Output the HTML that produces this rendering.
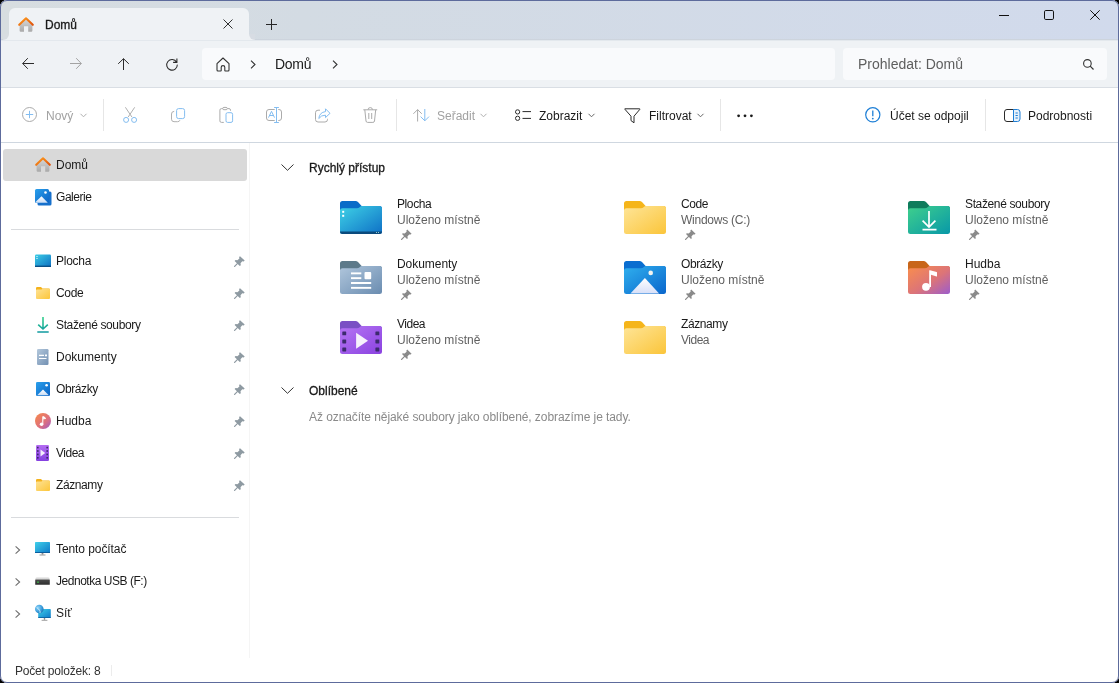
<!DOCTYPE html>
<html><head><meta charset="utf-8">
<style>
*{box-sizing:border-box;margin:0;padding:0}
html,body{width:1119px;height:683px;overflow:hidden;background:#000}
body{font-family:"Liberation Sans",sans-serif;font-size:12px;color:#1a1a1a;position:relative}
.win{position:absolute;left:0;top:0;width:1119px;height:683px;border-radius:7px;overflow:hidden;background:#fff}
.frame{position:absolute;left:0;top:0;width:1119px;height:683px;border:1px solid #5d6b9c;border-radius:7px;pointer-events:none}
.a{position:absolute}
svg{position:absolute;overflow:visible}
.t{position:absolute;white-space:nowrap;line-height:12px;font-size:12px;will-change:transform}
.title{position:absolute;left:0;top:0;width:1119px;height:40px;background:linear-gradient(90deg,#d7dde0 0%,#d3dbe3 27%,#d1daec 100%)}
.tab{position:absolute;left:9px;top:8px;width:240px;height:33px;background:#eff2f5;border-radius:6px 6px 0 0}
.tabfl{position:absolute;top:34px;width:6px;height:6px;background:#eff2f5}
.tabfl i{position:absolute;left:0;top:0;width:6px;height:6px;background:#d8dde1}
.addr{position:absolute;left:0;top:40px;width:1119px;height:47px;background:#eff2f5}
.addrline{position:absolute;left:0;top:87px;width:1119px;height:1px;background:#d9dee4}
.box{position:absolute;top:48px;height:32px;background:#f9fafc;border-radius:4px}
.tool{position:absolute;left:0;top:88px;width:1119px;height:54px;background:#fff}
.toolline{position:absolute;left:0;top:142px;width:1119px;height:1px;background:#cfd7e0}
.vsep{position:absolute;top:99px;width:1px;height:32px;background:#e6e6e6}
.gray{color:#a2a2a2}
.side{position:absolute;left:249px;top:143px;width:1px;height:515px;background:#f5f5f5}
.sel{position:absolute;left:3px;top:149px;width:244px;height:32px;background:#d9d9d9;border-radius:3px}
.sep{position:absolute;left:11px;width:228px;height:1px;background:#d9dbde}
.sub{color:#5f5f5f}
.hd{font-weight:400;-webkit-text-stroke:0.3px #1a1a1a;color:#1a1a1a}
</style></head><body>
<div class="win">
  <!-- title bar -->
  <div class="title"></div>
  <div class="a" style="left:0;top:39px;width:1119px;height:1px;background:#cdd4dd"></div>
  <div class="tab"></div>
  <div class="tabfl" style="left:3px"><i style="border-radius:0 0 6px 0"></i></div>
  <div class="tabfl" style="left:249px"><i style="border-radius:0 0 0 6px;background:#d7dce3"></i></div>
  <!-- home icon tab -->
  <svg style="left:18px;top:17px" width="16" height="16" viewBox="0 0 16 16">
    <defs>
      <linearGradient id="hb" x1="0" y1="0" x2="0" y2="1"><stop offset="0" stop-color="#d6d6d6"/><stop offset="1" stop-color="#a9a9a9"/></linearGradient>
      <linearGradient id="hr" x1="0" y1="0" x2="1" y2="1"><stop offset="0" stop-color="#ff9e1f"/><stop offset="1" stop-color="#e0520a"/></linearGradient>
    </defs>
    <path d="M1.6 8 L8 2.2 L14.4 8 V13.6 Q14.4 14.8 13.2 14.8 H10.2 V9.2 H6 V14.8 H2.8 Q1.6 14.8 1.6 13.6 Z" fill="url(#hb)"/>
    <path d="M1.2 7.8 L8 1.3 L14.8 7.8" fill="none" stroke="url(#hr)" stroke-width="2.1" stroke-linecap="round" stroke-linejoin="round"/>
  </svg>
  <div class="t hd" style="left:45px;top:19px">Domů</div>
  <svg style="left:223px;top:19px" width="10" height="10" viewBox="0 0 10 10"><path d="M0.5 0.5 L9.5 9.5 M9.5 0.5 L0.5 9.5" stroke="#262626" stroke-width="0.95"/></svg>
  <svg style="left:266px;top:19px" width="11" height="11" viewBox="0 0 11 11"><path d="M5.5 0 V11 M0 5.5 H11" stroke="#262626" stroke-width="1"/></svg>
  <!-- window controls -->
  <svg style="left:999px;top:10px" width="10" height="10" viewBox="0 0 10 10"><path d="M0 5.5 H10" stroke="#111" stroke-width="1"/></svg>
  <svg style="left:1044px;top:10px" width="10" height="10" viewBox="0 0 10 10"><rect x="0.5" y="0.5" width="9" height="9" rx="1.3" fill="none" stroke="#111" stroke-width="1"/></svg>
  <svg style="left:1090px;top:10px" width="10" height="10" viewBox="0 0 10 10"><path d="M0.3 0.3 L9.7 9.7 M9.7 0.3 L0.3 9.7" stroke="#111" stroke-width="1"/></svg>

  <!-- address row -->
  <div class="addr"></div>
  <div class="a" style="left:0;top:40px;width:1119px;height:1px;background:#e3e8ed"></div>
  <div class="addrline"></div>
  <svg style="left:22px;top:58px" width="12" height="12" viewBox="0 0 12 12"><path d="M5.8 0.2 L0.7 5.5 L5.8 10.8 M0.7 5.5 H12" fill="none" stroke="#2b2b2b" stroke-width="1"/></svg>
  <svg style="left:70px;top:58px" width="12" height="12" viewBox="0 0 12 12"><path d="M6.2 0.2 L11.3 5.5 L6.2 10.8 M11.3 5.5 H0" fill="none" stroke="#a3a3a3" stroke-width="1"/></svg>
  <svg style="left:118px;top:58px" width="12" height="12" viewBox="0 0 12 12"><path d="M0.2 5.8 L5.5 0.7 L10.8 5.8 M5.5 0.7 V12" fill="none" stroke="#2b2b2b" stroke-width="1"/></svg>
  <svg style="left:166px;top:58px" width="12" height="12" viewBox="0 0 12 12"><path d="M10.6 4.2 A5.3 5.3 0 1 0 11.3 6.6 M10.9 0.6 V4.4 H7.1" fill="none" stroke="#2b2b2b" stroke-width="1.1"/></svg>
  <div class="box" style="left:202px;width:633px"></div>
  <svg style="left:216px;top:57px" width="14" height="15" viewBox="0 0 14 15"><path d="M1 6.6 L7 1 L13 6.6 V13 Q13 14 12 14 H9.3 Q8.8 14 8.8 13.5 V10.2 Q8.8 8.6 7 8.6 Q5.2 8.6 5.2 10.2 V13.5 Q5.2 14 4.7 14 H2 Q1 14 1 13 Z" fill="none" stroke="#333" stroke-width="1.1" stroke-linejoin="round"/></svg>
  <svg style="left:250px;top:60px" width="7" height="9" viewBox="0 0 7 9"><path d="M1 0.6 L5 4.5 L1 8.4" fill="none" stroke="#333" stroke-width="1.1"/></svg>
  <div class="t" style="left:275px;top:57px;font-size:14px;line-height:14px;color:#1a1a1a;letter-spacing:-0.3px">Domů</div>
  <svg style="left:332px;top:60px" width="7" height="9" viewBox="0 0 7 9"><path d="M1 0.6 L5 4.5 L1 8.4" fill="none" stroke="#333" stroke-width="1.1"/></svg>
  <div class="box" style="left:843px;width:264px"></div>
  <div class="t" style="left:858px;top:57px;font-size:14px;line-height:14px;color:#5e5e5e">Prohledat: Domů</div>
  <svg style="left:1083px;top:59px" width="11" height="11" viewBox="0 0 11 11"><circle cx="4.4" cy="4.4" r="3.8" fill="none" stroke="#333" stroke-width="1.1"/><path d="M7.2 7.2 L10.5 10.5" stroke="#333" stroke-width="1.2"/></svg>

  <!-- toolbar -->
  <div class="tool"></div>
  <div class="toolline"></div>
    <svg style="left:22px;top:107px" width="16" height="16" viewBox="0 0 16 16"><circle cx="7.5" cy="7.5" r="7" fill="none" stroke="#ababab" stroke-width="1"/><path d="M7.5 3.8 V11.2 M3.8 7.5 H11.2" stroke="#84bdf0" stroke-width="1"/></svg>
  <div class="t gray" style="left:46px;top:110px">Nový</div>
  <svg style="left:80px;top:113px" width="7" height="5" viewBox="0 0 7 5"><path d="M0.5 0.8 L3.5 3.8 L6.5 0.8" fill="none" stroke="#b0b0b0" stroke-width="1"/></svg>
  <div class="vsep" style="left:103px"></div>
  <svg style="left:123px;top:107px" width="15" height="16" viewBox="0 0 15 16"><path d="M2.4 0.3 L8.9 10 M11.7 0.3 L5.2 10" stroke="#b0b0b0" stroke-width="1"/><circle cx="3.1" cy="12.9" r="2.5" fill="none" stroke="#84bdf0" stroke-width="1"/><circle cx="11.1" cy="12.9" r="2.5" fill="none" stroke="#84bdf0" stroke-width="1"/></svg>
  <svg style="left:171px;top:108px" width="15" height="15" viewBox="0 0 15 15"><path d="M3.2 3.4 Q0.5 3.4 0.5 6 V11.2 Q0.5 13.7 3 13.7 H6.5 Q8.5 13.7 8.9 12.2" fill="none" stroke="#b0b0b0" stroke-width="1"/><rect x="5.6" y="0.6" width="8" height="10" rx="2" fill="none" stroke="#84bdf0" stroke-width="1"/></svg>
  <svg style="left:219px;top:107px" width="15" height="16" viewBox="0 0 15 16"><path d="M3.6 1.6 H2.4 Q0.9 1.6 0.9 3.1 V13.9 Q0.9 15.4 2.4 15.4 H4.8 M8.4 1.6 H10 Q11.5 1.6 11.5 3.1 V3.8" fill="none" stroke="#ababab" stroke-width="1"/><rect x="3.7" y="0.4" width="4.6" height="2.3" rx="1.15" fill="none" stroke="#ababab" stroke-width="1"/><rect x="7" y="5.7" width="6.6" height="9.7" rx="1.6" fill="none" stroke="#84bdf0" stroke-width="1"/></svg>
  <svg style="left:266px;top:107px" width="17" height="16" viewBox="0 0 17 16"><path d="M8.7 2.5 H3 Q0.5 2.5 0.5 5 V11 Q0.5 13.5 3 13.5 H8.7 M12.3 2.5 H13 Q15.5 2.5 15.5 5 V11 Q15.5 13.5 13 13.5 H12.3" fill="none" stroke="#ababab" stroke-width="1"/><path d="M2.5 10.6 L5.5 4.3 L8.5 10.6 M3.5 8.5 H7.5" fill="none" stroke="#84bdf0" stroke-width="1"/><path d="M10.5 0.5 V15.5 M8.1 0.5 H12.9 M8.1 15.5 H12.9" stroke="#84bdf0" stroke-width="1"/></svg>
  <svg style="left:315px;top:108px" width="16" height="15" viewBox="0 0 16 15"><path d="M5 2.2 H3 Q0.5 2.2 0.5 4.7 V11.5 Q0.5 14 3 14 H10 Q12.5 14 12.5 11.5 V10.8" fill="none" stroke="#ababab" stroke-width="1"/><path d="M10.5 0.8 L15 5.3 L10.5 9.6 V7.2 Q6.2 7 3.8 10.5 Q4.4 4.4 10.5 3.6 Z" fill="none" stroke="#84bdf0" stroke-width="1" stroke-linejoin="round"/></svg>
  <svg style="left:363px;top:107px" width="15" height="16" viewBox="0 0 15 16"><path d="M0.3 2.8 H14.2 M5 2.8 Q5 0.6 7.25 0.6 Q9.5 0.6 9.5 2.8 M1.8 2.8 L3 14 Q3.2 15.4 4.6 15.4 H9.9 Q11.3 15.4 11.5 14 L12.7 2.8 M5.8 6 V12 M8.7 6 V12" fill="none" stroke="#ababab" stroke-width="1"/></svg>
  <div class="vsep" style="left:396px"></div>
  <svg style="left:413px;top:109px" width="17" height="13" viewBox="0 0 17 13"><path d="M0.4 4.8 L4.6 0.6 L8.8 4.8 M4.6 0.6 V12.5" fill="none" stroke="#ababab" stroke-width="1"/><path d="M7.6 7.6 L11.8 11.8 L16 7.6 M11.8 11.8 V0" fill="none" stroke="#84bdf0" stroke-width="1"/></svg>
  <div class="t gray" style="left:437px;top:110px">Seřadit</div>
  <svg style="left:480px;top:113px" width="7" height="5" viewBox="0 0 7 5"><path d="M0.5 0.8 L3.5 3.8 L6.5 0.8" fill="none" stroke="#b0b0b0" stroke-width="1"/></svg>
  <svg style="left:515px;top:109px" width="17" height="13" viewBox="0 0 17 13"><rect x="0.5" y="0.8" width="4.2" height="4.2" rx="2" fill="none" stroke="#2a2a2a" stroke-width="1"/><rect x="0.5" y="7.2" width="4.2" height="4.2" rx="2" fill="none" stroke="#2a2a2a" stroke-width="1"/><path d="M7.5 2.6 H16 M7.5 9.4 H16" stroke="#2a2a2a" stroke-width="1"/></svg>
  <div class="t" style="left:539px;top:110px">Zobrazit</div>
  <svg style="left:588px;top:113px" width="7" height="5" viewBox="0 0 7 5"><path d="M0.5 0.8 L3.5 3.8 L6.5 0.8" fill="none" stroke="#666" stroke-width="1"/></svg>
  <svg style="left:624px;top:108px" width="17" height="16" viewBox="0 0 17 16"><path d="M0.8 0.8 H15.6 Q16.2 0.8 15.8 1.4 L10 8.2 V14.8 L7 12.6 V8.2 L1 1.4 Q0.6 0.8 0.8 0.8 Z" fill="none" stroke="#2a2a2a" stroke-width="1" stroke-linejoin="round"/></svg>
  <div class="t" style="left:649px;top:110px">Filtrovat</div>
  <svg style="left:697px;top:113px" width="7" height="5" viewBox="0 0 7 5"><path d="M0.5 0.8 L3.5 3.8 L6.5 0.8" fill="none" stroke="#666" stroke-width="1"/></svg>
  <div class="vsep" style="left:720px"></div>
  <svg style="left:737px;top:114px" width="17" height="4" viewBox="0 0 17 4"><circle cx="1.6" cy="1.8" r="1.4" fill="#1a1a1a"/><circle cx="8" cy="1.8" r="1.4" fill="#1a1a1a"/><circle cx="14.4" cy="1.8" r="1.4" fill="#1a1a1a"/></svg>
  <svg style="left:865px;top:107px" width="16" height="16" viewBox="0 0 16 16"><circle cx="7.8" cy="7.8" r="7.1" fill="none" stroke="#1e7fd6" stroke-width="1.2"/><path d="M7.8 3.6 V9.2" stroke="#1e7fd6" stroke-width="1.3"/><circle cx="7.8" cy="11.6" r="0.9" fill="#1e7fd6"/></svg>
  <div class="t" style="left:890px;top:110px">Účet se odpojil</div>
  <div class="vsep" style="left:985px"></div>
  <svg style="left:1004px;top:109px" width="17" height="13" viewBox="0 0 17 13"><path d="M10 0.5 H3 Q0.5 0.5 0.5 3 V10 Q0.5 12.5 3 12.5 H10" fill="none" stroke="#2a2a2a" stroke-width="1"/><path d="M9.5 0.5 H13.5 Q16 0.5 16 3 V10 Q16 12.5 13.5 12.5 H9.5 Z" fill="#e6f1fb" stroke="#1e7fd6" stroke-width="1"/><path d="M11.5 4 H13.8 M11.5 6.5 H13.8 M11.5 9 H13.8" stroke="#1e7fd6" stroke-width="1"/></svg>
  <div class="t" style="left:1028px;top:110px">Podrobnosti</div>


  <!-- sidebar -->
  <div class="side"></div>
  <div class="sel"></div>
  <div class="sep" style="top:229px"></div>
  <div class="sep" style="top:517px"></div>
    <!-- sidebar icons -->
  <svg style="left:35px;top:157px" width="16" height="16" viewBox="0 0 16 16">
    <path d="M1.6 8 L8 2.2 L14.4 8 V13.6 Q14.4 14.8 13.2 14.8 H10.2 V9.2 H6 V14.8 H2.8 Q1.6 14.8 1.6 13.6 Z" fill="url(#hb)"/>
    <path d="M1.2 7.8 L8 1.3 L14.8 7.8" fill="none" stroke="url(#hr)" stroke-width="2.1" stroke-linecap="round" stroke-linejoin="round"/>
  </svg>
  <div class="t" style="left:56px;top:159px">Domů</div>
  <svg style="left:35px;top:189px" width="17" height="17" viewBox="0 0 17 17">
    <defs><linearGradient id="gal" x1="0" y1="0" x2="1" y2="1"><stop offset="0" stop-color="#2aa0ec"/><stop offset="1" stop-color="#0b62c4"/></linearGradient>
    <linearGradient id="mtn" x1="0" y1="0" x2="0" y2="1"><stop offset="0" stop-color="#ffffff"/><stop offset="1" stop-color="#c8dcf5"/></linearGradient></defs>
    <rect x="2.5" y="2.5" width="14" height="14" rx="1.5" fill="#1670cc"/>
    <rect x="0" y="0" width="14" height="14" rx="1.5" fill="url(#gal)"/>
    <path d="M0.5 13 L6.5 7.2 L12.8 13.8 H1.3 Z" fill="url(#mtn)"/>
    <circle cx="10.5" cy="3.5" r="1.3" fill="#fff"/>
  </svg>
  <div class="t" style="left:56px;top:191px;letter-spacing:-0.45px">Galerie</div>

  <svg style="left:35px;top:254px" width="16" height="13" viewBox="0 0 16 13">
    <defs><linearGradient id="desk" x1="0" y1="0" x2="1" y2="1"><stop offset="0" stop-color="#3ccde6"/><stop offset="1" stop-color="#0d6fc2"/></linearGradient></defs>
    <rect x="0" y="0.5" width="16" height="12.5" rx="1.2" fill="url(#desk)"/>
    <rect x="0" y="11.6" width="16" height="1.4" fill="#0b4f86"/>
    <rect x="1.5" y="2" width="1" height="1" fill="#fff"/><rect x="1.5" y="4" width="1" height="1" fill="#fff"/>
  </svg>
  <div class="t" style="left:56px;top:255px;letter-spacing:-0.25px">Plocha</div>
  <svg style="left:36px;top:287px" width="14" height="12" viewBox="0 0 14 12">
    <path d="M0 1.2 Q0 0 1.2 0 H5 L6.5 1.6 H12.8 Q14 1.6 14 2.8 V5 H0 Z" fill="#f4b21c"/>
    <path d="M0 3.6 Q0 2.6 1 2.6 H5.5 L6.6 1.8 H13 Q14 1.8 14 2.8 V11 Q14 12 13 12 H1 Q0 12 0 11 Z" fill="url(#yel)"/>
    <defs><linearGradient id="yel" x1="0" y1="0" x2="1" y2="1"><stop offset="0" stop-color="#fee295"/><stop offset="1" stop-color="#fcc63a"/></linearGradient></defs>
  </svg>
  <div class="t" style="left:56px;top:287px;letter-spacing:-0.35px">Code</div>
  <svg style="left:37px;top:317px" width="12" height="16" viewBox="0 0 12 16">
    <defs><linearGradient id="dl" x1="0" y1="0" x2="0" y2="1"><stop offset="0" stop-color="#34d08c"/><stop offset="1" stop-color="#0f9aa0"/></linearGradient></defs>
    <path d="M6 0 V12 M1.2 7.6 L6 12 L10.8 7.6 M0.3 15 H11.7" fill="none" stroke="url(#dl)" stroke-width="1.6"/>
  </svg>
  <div class="t" style="left:56px;top:319px;letter-spacing:-0.37px">Stažené soubory</div>
  <svg style="left:37px;top:349px" width="12" height="16" viewBox="0 0 12 16">
    <defs><linearGradient id="doc" x1="0" y1="0" x2="1" y2="1"><stop offset="0" stop-color="#b4c8dc"/><stop offset="1" stop-color="#7290b2"/></linearGradient></defs>
    <rect x="0" y="0" width="11.5" height="16" rx="1.3" fill="url(#doc)"/>
    <path d="M2 6.3 H7 M2 9.5 H9.5" stroke="#fff" stroke-width="1.2"/>
    <rect x="8" y="5.5" width="2" height="1.8" fill="#fff"/>
  </svg>
  <div class="t" style="left:56px;top:351px">Dokumenty</div>
  <svg style="left:36px;top:382px" width="14" height="14" viewBox="0 0 14 14">
    <rect x="0" y="0" width="14" height="14" rx="1.3" fill="url(#gal)"/>
    <path d="M1.2 13.2 L7 7.6 L12.8 13.2 Z" fill="url(#mtn)"/>
    <circle cx="10.6" cy="3.2" r="1.3" fill="#fff"/>
  </svg>
  <div class="t" style="left:56px;top:383px;letter-spacing:-0.4px">Obrázky</div>
  <svg style="left:35px;top:413px" width="16" height="16" viewBox="0 0 16 16">
    <defs><linearGradient id="mus" x1="0" y1="0" x2="1" y2="1"><stop offset="0" stop-color="#f88a48"/><stop offset="0.6" stop-color="#dc6f80"/><stop offset="1" stop-color="#9a5ac8"/></linearGradient></defs>
    <circle cx="8" cy="8" r="8" fill="url(#mus)"/>
    <circle cx="6.6" cy="11.2" r="1.8" fill="#fff"/>
    <path d="M7.8 11 V3.6 Q10 3.8 10.6 5.6 L8.2 5.8" fill="#fff" stroke="#fff" stroke-width="1"/>
  </svg>
  <div class="t" style="left:56px;top:415px">Hudba</div>
  <svg style="left:36px;top:445px" width="13" height="16" viewBox="0 0 13 16">
    <defs><linearGradient id="vid" x1="0" y1="0" x2="0" y2="1"><stop offset="0" stop-color="#b46cf2"/><stop offset="1" stop-color="#8440e0"/></linearGradient></defs>
    <rect x="0" y="0" width="13" height="16" rx="1.3" fill="url(#vid)"/>
    <g fill="#3b2868"><rect x="1" y="1.8" width="1.6" height="1.6"/><rect x="1" y="5.2" width="1.6" height="1.6"/><rect x="1" y="8.6" width="1.6" height="1.6"/><rect x="1" y="12" width="1.6" height="1.6"/>
    <rect x="10.4" y="1.8" width="1.6" height="1.6"/><rect x="10.4" y="5.2" width="1.6" height="1.6"/><rect x="10.4" y="8.6" width="1.6" height="1.6"/><rect x="10.4" y="12" width="1.6" height="1.6"/></g>
    <path d="M4.5 4.6 L9.2 8 L4.5 11.4 Z" fill="#f4eefc"/>
  </svg>
  <div class="t" style="left:56px;top:447px;letter-spacing:-0.5px">Videa</div>
  <svg style="left:36px;top:479px" width="14" height="12" viewBox="0 0 14 12">
    <path d="M0 1.2 Q0 0 1.2 0 H5 L6.5 1.6 H12.8 Q14 1.6 14 2.8 V5 H0 Z" fill="#f4b21c"/>
    <path d="M0 3.6 Q0 2.6 1 2.6 H5.5 L6.6 1.8 H13 Q14 1.8 14 2.8 V11 Q14 12 13 12 H1 Q0 12 0 11 Z" fill="url(#yel)"/>
  </svg>
  <div class="t" style="left:56px;top:479px;letter-spacing:-0.4px">Záznamy</div>
  <!-- pins -->
    <svg style="left:234px;top:255.5px" width="11" height="11" viewBox="0 0 11 11"><path d="M6 0.2 L10.7 4.6 L9.7 5.5 L8.3 5.3 L6.5 7.3 L6.8 9.2 L5.8 10 L0.6 4.9 L1.5 4 L3.4 4.3 L5.4 2.5 L5.1 1.1 Z" fill="#8e9aa2"/><path d="M3.6 7.4 L0.6 10.4" stroke="#8e9aa2" stroke-width="1.3" stroke-linecap="round"/></svg>
  <svg style="left:234px;top:287.5px" width="11" height="11" viewBox="0 0 11 11"><path d="M6 0.2 L10.7 4.6 L9.7 5.5 L8.3 5.3 L6.5 7.3 L6.8 9.2 L5.8 10 L0.6 4.9 L1.5 4 L3.4 4.3 L5.4 2.5 L5.1 1.1 Z" fill="#8e9aa2"/><path d="M3.6 7.4 L0.6 10.4" stroke="#8e9aa2" stroke-width="1.3" stroke-linecap="round"/></svg>
  <svg style="left:234px;top:319.5px" width="11" height="11" viewBox="0 0 11 11"><path d="M6 0.2 L10.7 4.6 L9.7 5.5 L8.3 5.3 L6.5 7.3 L6.8 9.2 L5.8 10 L0.6 4.9 L1.5 4 L3.4 4.3 L5.4 2.5 L5.1 1.1 Z" fill="#8e9aa2"/><path d="M3.6 7.4 L0.6 10.4" stroke="#8e9aa2" stroke-width="1.3" stroke-linecap="round"/></svg>
  <svg style="left:234px;top:351.5px" width="11" height="11" viewBox="0 0 11 11"><path d="M6 0.2 L10.7 4.6 L9.7 5.5 L8.3 5.3 L6.5 7.3 L6.8 9.2 L5.8 10 L0.6 4.9 L1.5 4 L3.4 4.3 L5.4 2.5 L5.1 1.1 Z" fill="#8e9aa2"/><path d="M3.6 7.4 L0.6 10.4" stroke="#8e9aa2" stroke-width="1.3" stroke-linecap="round"/></svg>
  <svg style="left:234px;top:383.5px" width="11" height="11" viewBox="0 0 11 11"><path d="M6 0.2 L10.7 4.6 L9.7 5.5 L8.3 5.3 L6.5 7.3 L6.8 9.2 L5.8 10 L0.6 4.9 L1.5 4 L3.4 4.3 L5.4 2.5 L5.1 1.1 Z" fill="#8e9aa2"/><path d="M3.6 7.4 L0.6 10.4" stroke="#8e9aa2" stroke-width="1.3" stroke-linecap="round"/></svg>
  <svg style="left:234px;top:415.5px" width="11" height="11" viewBox="0 0 11 11"><path d="M6 0.2 L10.7 4.6 L9.7 5.5 L8.3 5.3 L6.5 7.3 L6.8 9.2 L5.8 10 L0.6 4.9 L1.5 4 L3.4 4.3 L5.4 2.5 L5.1 1.1 Z" fill="#8e9aa2"/><path d="M3.6 7.4 L0.6 10.4" stroke="#8e9aa2" stroke-width="1.3" stroke-linecap="round"/></svg>
  <svg style="left:234px;top:447.5px" width="11" height="11" viewBox="0 0 11 11"><path d="M6 0.2 L10.7 4.6 L9.7 5.5 L8.3 5.3 L6.5 7.3 L6.8 9.2 L5.8 10 L0.6 4.9 L1.5 4 L3.4 4.3 L5.4 2.5 L5.1 1.1 Z" fill="#8e9aa2"/><path d="M3.6 7.4 L0.6 10.4" stroke="#8e9aa2" stroke-width="1.3" stroke-linecap="round"/></svg>
  <svg style="left:234px;top:479.5px" width="11" height="11" viewBox="0 0 11 11"><path d="M6 0.2 L10.7 4.6 L9.7 5.5 L8.3 5.3 L6.5 7.3 L6.8 9.2 L5.8 10 L0.6 4.9 L1.5 4 L3.4 4.3 L5.4 2.5 L5.1 1.1 Z" fill="#8e9aa2"/><path d="M3.6 7.4 L0.6 10.4" stroke="#8e9aa2" stroke-width="1.3" stroke-linecap="round"/></svg>


  <!-- bottom tree -->
  <svg style="left:15px;top:546px" width="6" height="8" viewBox="0 0 6 8"><path d="M0.6 0.4 L4.6 4 L0.6 7.6" fill="none" stroke="#6e6e6e" stroke-width="1.1"/></svg>
  <svg style="left:15px;top:578px" width="6" height="8" viewBox="0 0 6 8"><path d="M0.6 0.4 L4.6 4 L0.6 7.6" fill="none" stroke="#6e6e6e" stroke-width="1.1"/></svg>
  <svg style="left:15px;top:610px" width="6" height="8" viewBox="0 0 6 8"><path d="M0.6 0.4 L4.6 4 L0.6 7.6" fill="none" stroke="#6e6e6e" stroke-width="1.1"/></svg>
  <svg style="left:35px;top:542px" width="15" height="14" viewBox="0 0 15 14">
    <defs><linearGradient id="mon" x1="0" y1="0" x2="1" y2="1"><stop offset="0" stop-color="#3fd0ea"/><stop offset="1" stop-color="#0f78c8"/></linearGradient></defs>
    <rect x="0" y="0" width="15" height="11" rx="0.8" fill="url(#mon)"/>
    <rect x="0" y="10" width="15" height="1" fill="#0b5e9e"/>
    <rect x="6.6" y="11" width="1.8" height="1.6" fill="#8a8a8a"/>
    <rect x="4.5" y="12.5" width="6" height="1" fill="#9a9a9a"/>
  </svg>
  <div class="t" style="left:56px;top:543px;letter-spacing:-0.08px">Tento počítač</div>
  <svg style="left:35px;top:577px" width="15" height="8" viewBox="0 0 15 8">
    <defs><linearGradient id="usbt" x1="0" y1="0" x2="0" y2="1"><stop offset="0" stop-color="#f2f2f2"/><stop offset="1" stop-color="#c8c8c8"/></linearGradient>
    <linearGradient id="usbb" x1="0" y1="0" x2="0" y2="1"><stop offset="0" stop-color="#4a4a4a"/><stop offset="1" stop-color="#2e2e2e"/></linearGradient></defs>
    <path d="M1.8 0 H13.2 Q14.4 0.4 14.8 2.6 H0.2 Q0.6 0.4 1.8 0 Z" fill="url(#usbt)"/>
    <rect x="0.2" y="2.6" width="14.6" height="5.2" rx="0.5" fill="url(#usbb)"/>
    <rect x="2.4" y="4.4" width="1.2" height="1.6" fill="#3ed14b"/>
  </svg>
  <div class="t" style="left:56px;top:575px;letter-spacing:-0.47px">Jednotka USB (F:)</div>
  <svg style="left:35px;top:604px" width="17" height="17" viewBox="0 0 17 17">
    <defs><radialGradient id="glb" cx="0.35" cy="0.35" r="0.75"><stop offset="0" stop-color="#8fd4f8"/><stop offset="0.6" stop-color="#3b9ddc"/><stop offset="1" stop-color="#1e6fb0"/></radialGradient></defs>
    <rect x="3.2" y="5" width="12.6" height="9" rx="0.8" fill="url(#mon)"/>
    <rect x="3.2" y="13.2" width="12.6" height="0.8" fill="#0b5e9e"/>
    <rect x="8.8" y="14" width="1.4" height="1.8" fill="#8a8a8a"/>
    <rect x="6.6" y="15.8" width="5.8" height="1" fill="#a0a0a0"/>
    <circle cx="4.3" cy="5" r="4.3" fill="url(#glb)"/>
    <path d="M1.6 3.4 Q3.6 4.6 4.6 6.4 Q5.4 7.6 5 9" fill="none" stroke="#d8f0fc" stroke-width="0.9"/>
  </svg>
  <div class="t" style="left:56px;top:607px">Síť</div>


    <svg style="left:281px;top:164px" width="13" height="7" viewBox="0 0 13 7"><path d="M0.5 0.5 L6.5 6.3 L12.5 0.5" fill="none" stroke="#333" stroke-width="1"/></svg>
  <div class="t hd" style="left:309px;top:162px">Rychlý přístup</div>
  <svg style="left:340px;top:201px" width="42" height="33" viewBox="0 0 42 33">
    <defs><linearGradient id="gdesk" x1="0" y1="0" x2="1" y2="1"><stop offset="0" stop-color="#3fd2e6"/><stop offset="1" stop-color="#0e70c6"/></linearGradient></defs>
    <path d="M0 2.5 Q0 0 2.5 0 H15.5 Q17 0 18 1 L21.6 5 H39.5 Q42 5 42 7.5 V14 H0 Z" fill="#0a6cc8"/>
    <path d="M0 9.6 Q0 7.2 2.5 7.2 H17 Q18.6 7.2 19.6 6.2 L20.4 5.6 Q21 5 22 5 H39.5 Q42 5 42 7.5 V30.5 Q42 33 39.5 33 H2.5 Q0 33 0 30.5 Z" fill="url(#gdesk)"/>
    <path d="M0 30.5 V31 Q0 33 2.5 33 H39.5 Q42 33 42 31 V30.5 Z" fill="#0b4a7c"/><rect x="2.2" y="9.8" width="2" height="2" fill="#fff"/><rect x="2.2" y="13.8" width="2" height="2" fill="#fff"/><rect x="36" y="31" width="1" height="1" fill="#9cc"/><rect x="38" y="31" width="1" height="1" fill="#9cc"/>
  </svg>
  <div class="t" style="left:397px;top:198px;letter-spacing:-0.4px">Plocha</div>
  <div class="t sub" style="left:397px;top:214px">Uloženo místně</div>
  <svg style="left:401px;top:229px" width="11" height="11" viewBox="0 0 11 11"><path d="M6.2 0.4 L10.6 4.8 L9.6 5.6 L8.2 5.4 L6.4 7.4 L6.8 9.2 L6 10 L1 5 L1.8 4.2 L3.6 4.6 L5.6 2.8 L5.4 1.4 Z" fill="#8a8a8a"/><path d="M3.6 7.4 L0.6 10.4" stroke="#8a8a8a" stroke-width="1.3" stroke-linecap="round"/></svg>
  <svg style="left:624px;top:201px" width="42" height="33" viewBox="0 0 42 33">
    <defs><linearGradient id="gcode" x1="0" y1="0" x2="1" y2="1"><stop offset="0" stop-color="#fee598"/><stop offset="1" stop-color="#fbc53a"/></linearGradient></defs>
    <path d="M0 2.5 Q0 0 2.5 0 H15.5 Q17 0 18 1 L21.6 5 H39.5 Q42 5 42 7.5 V14 H0 Z" fill="#f5b51a"/>
    <path d="M0 9.6 Q0 7.2 2.5 7.2 H17 Q18.6 7.2 19.6 6.2 L20.4 5.6 Q21 5 22 5 H39.5 Q42 5 42 7.5 V30.5 Q42 33 39.5 33 H2.5 Q0 33 0 30.5 Z" fill="url(#gcode)"/>
    
  </svg>
  <div class="t" style="left:681px;top:198px;letter-spacing:-0.45px">Code</div>
  <div class="t sub" style="left:681px;top:214px;letter-spacing:-0.25px">Windows (C:)</div>
  <svg style="left:685px;top:229px" width="11" height="11" viewBox="0 0 11 11"><path d="M6.2 0.4 L10.6 4.8 L9.6 5.6 L8.2 5.4 L6.4 7.4 L6.8 9.2 L6 10 L1 5 L1.8 4.2 L3.6 4.6 L5.6 2.8 L5.4 1.4 Z" fill="#8a8a8a"/><path d="M3.6 7.4 L0.6 10.4" stroke="#8a8a8a" stroke-width="1.3" stroke-linecap="round"/></svg>
  <svg style="left:908px;top:201px" width="42" height="33" viewBox="0 0 42 33">
    <defs><linearGradient id="gdl" x1="0" y1="0" x2="1" y2="1"><stop offset="0" stop-color="#3fd08c"/><stop offset="1" stop-color="#0898a8"/></linearGradient></defs>
    <path d="M0 2.5 Q0 0 2.5 0 H15.5 Q17 0 18 1 L21.6 5 H39.5 Q42 5 42 7.5 V14 H0 Z" fill="#0e7c5c"/>
    <path d="M0 9.6 Q0 7.2 2.5 7.2 H17 Q18.6 7.2 19.6 6.2 L20.4 5.6 Q21 5 22 5 H39.5 Q42 5 42 7.5 V30.5 Q42 33 39.5 33 H2.5 Q0 33 0 30.5 Z" fill="url(#gdl)"/>
    <path d="M21 10 V26.5 M14.6 19.6 L21 26 L27.4 19.6 M14.5 28.6 H28.5" fill="none" stroke="#fff" stroke-width="1.7"/>
  </svg>
  <div class="t" style="left:965px;top:198px;letter-spacing:-0.37px">Stažené soubory</div>
  <div class="t sub" style="left:965px;top:214px">Uloženo místně</div>
  <svg style="left:969px;top:229px" width="11" height="11" viewBox="0 0 11 11"><path d="M6.2 0.4 L10.6 4.8 L9.6 5.6 L8.2 5.4 L6.4 7.4 L6.8 9.2 L6 10 L1 5 L1.8 4.2 L3.6 4.6 L5.6 2.8 L5.4 1.4 Z" fill="#8a8a8a"/><path d="M3.6 7.4 L0.6 10.4" stroke="#8a8a8a" stroke-width="1.3" stroke-linecap="round"/></svg>
  <svg style="left:340px;top:261px" width="42" height="33" viewBox="0 0 42 33">
    <defs><linearGradient id="gdoc" x1="0" y1="0" x2="1" y2="1"><stop offset="0" stop-color="#b0c6dc"/><stop offset="1" stop-color="#6a8cb0"/></linearGradient></defs>
    <path d="M0 2.5 Q0 0 2.5 0 H15.5 Q17 0 18 1 L21.6 5 H39.5 Q42 5 42 7.5 V14 H0 Z" fill="#5d7a8a"/>
    <path d="M0 9.6 Q0 7.2 2.5 7.2 H17 Q18.6 7.2 19.6 6.2 L20.4 5.6 Q21 5 22 5 H39.5 Q42 5 42 7.5 V30.5 Q42 33 39.5 33 H2.5 Q0 33 0 30.5 Z" fill="url(#gdoc)"/>
    <g fill="#fff"><rect x="11" y="11.4" width="10.3" height="1.9"/><rect x="11" y="16.2" width="10.3" height="1.9"/><rect x="24.5" y="11.1" width="6.7" height="7.1" rx="1"/><rect x="11" y="21" width="20.2" height="2"/><rect x="11" y="25.9" width="20.2" height="1.9"/></g>
  </svg>
  <div class="t" style="left:397px;top:258px;letter-spacing:-0.05px">Dokumenty</div>
  <div class="t sub" style="left:397px;top:274px">Uloženo místně</div>
  <svg style="left:401px;top:289px" width="11" height="11" viewBox="0 0 11 11"><path d="M6.2 0.4 L10.6 4.8 L9.6 5.6 L8.2 5.4 L6.4 7.4 L6.8 9.2 L6 10 L1 5 L1.8 4.2 L3.6 4.6 L5.6 2.8 L5.4 1.4 Z" fill="#8a8a8a"/><path d="M3.6 7.4 L0.6 10.4" stroke="#8a8a8a" stroke-width="1.3" stroke-linecap="round"/></svg>
  <svg style="left:624px;top:261px" width="42" height="33" viewBox="0 0 42 33">
    <defs><linearGradient id="gpic" x1="0" y1="0" x2="1" y2="1"><stop offset="0" stop-color="#30b0ee"/><stop offset="1" stop-color="#0a66cc"/></linearGradient></defs>
    <path d="M0 2.5 Q0 0 2.5 0 H15.5 Q17 0 18 1 L21.6 5 H39.5 Q42 5 42 7.5 V14 H0 Z" fill="#0a6ed0"/>
    <path d="M0 9.6 Q0 7.2 2.5 7.2 H17 Q18.6 7.2 19.6 6.2 L20.4 5.6 Q21 5 22 5 H39.5 Q42 5 42 7.5 V30.5 Q42 33 39.5 33 H2.5 Q0 33 0 30.5 Z" fill="url(#gpic)"/>
    <defs><linearGradient id="mt2" x1="0" y1="0" x2="0" y2="1"><stop offset="0" stop-color="#fff"/><stop offset="1" stop-color="#d8e0f8"/></linearGradient></defs><path d="M6.4 32.4 L20.9 16.9 L35.1 32.4 Z" fill="url(#mt2)"/><circle cx="26.7" cy="11.9" r="2.3" fill="#f4f4f0"/>
  </svg>
  <div class="t" style="left:681px;top:258px;letter-spacing:-0.4px">Obrázky</div>
  <div class="t sub" style="left:681px;top:274px">Uloženo místně</div>
  <svg style="left:685px;top:289px" width="11" height="11" viewBox="0 0 11 11"><path d="M6.2 0.4 L10.6 4.8 L9.6 5.6 L8.2 5.4 L6.4 7.4 L6.8 9.2 L6 10 L1 5 L1.8 4.2 L3.6 4.6 L5.6 2.8 L5.4 1.4 Z" fill="#8a8a8a"/><path d="M3.6 7.4 L0.6 10.4" stroke="#8a8a8a" stroke-width="1.3" stroke-linecap="round"/></svg>
  <svg style="left:908px;top:261px" width="42" height="33" viewBox="0 0 42 33">
    <defs><linearGradient id="gmus" x1="0" y1="0" x2="1" y2="1"><stop offset="0" stop-color="#fa8e4c"/><stop offset="0.55" stop-color="#dc7478"/><stop offset="1" stop-color="#9c5ccc"/></linearGradient></defs>
    <path d="M0 2.5 Q0 0 2.5 0 H15.5 Q17 0 18 1 L21.6 5 H39.5 Q42 5 42 7.5 V14 H0 Z" fill="#c8661a"/>
    <path d="M0 9.6 Q0 7.2 2.5 7.2 H17 Q18.6 7.2 19.6 6.2 L20.4 5.6 Q21 5 22 5 H39.5 Q42 5 42 7.5 V30.5 Q42 33 39.5 33 H2.5 Q0 33 0 30.5 Z" fill="url(#gmus)"/>
    <circle cx="18" cy="25.8" r="3.9" fill="#fff"/><path d="M21.2 26 V9.4 Q21.4 9 22 9.2 L28.6 11 Q29 11.2 29 11.6 V15.2 Q29 15.6 28.6 15.5 L23 13.8 V26 Z" fill="#fff"/>
  </svg>
  <div class="t" style="left:965px;top:258px">Hudba</div>
  <div class="t sub" style="left:965px;top:274px">Uloženo místně</div>
  <svg style="left:969px;top:289px" width="11" height="11" viewBox="0 0 11 11"><path d="M6.2 0.4 L10.6 4.8 L9.6 5.6 L8.2 5.4 L6.4 7.4 L6.8 9.2 L6 10 L1 5 L1.8 4.2 L3.6 4.6 L5.6 2.8 L5.4 1.4 Z" fill="#8a8a8a"/><path d="M3.6 7.4 L0.6 10.4" stroke="#8a8a8a" stroke-width="1.3" stroke-linecap="round"/></svg>
  <svg style="left:340px;top:321px" width="42" height="33" viewBox="0 0 42 33">
    <defs><linearGradient id="gvid" x1="0" y1="0" x2="1" y2="1"><stop offset="0" stop-color="#b676f4"/><stop offset="1" stop-color="#8a42e0"/></linearGradient></defs>
    <path d="M0 2.5 Q0 0 2.5 0 H15.5 Q17 0 18 1 L21.6 5 H39.5 Q42 5 42 7.5 V14 H0 Z" fill="#7a50c4"/>
    <path d="M0 9.6 Q0 7.2 2.5 7.2 H17 Q18.6 7.2 19.6 6.2 L20.4 5.6 Q21 5 22 5 H39.5 Q42 5 42 7.5 V30.5 Q42 33 39.5 33 H2.5 Q0 33 0 30.5 Z" fill="url(#gvid)"/>
    <g fill="#3c2a6e"><rect x="2.3" y="10.4" width="3.9" height="3.9" rx="0.6"/><rect x="2.3" y="18.5" width="3.9" height="3.9" rx="0.6"/><rect x="2.3" y="26.5" width="3.9" height="3.9" rx="0.6"/><rect x="35.4" y="10.4" width="3.9" height="3.9" rx="0.6"/><rect x="35.4" y="18.5" width="3.9" height="3.9" rx="0.6"/><rect x="35.4" y="26.5" width="3.9" height="3.9" rx="0.6"/></g><path d="M16.1 11.7 L28 19.75 L16.1 27.8 Z" fill="#f6f2fc"/>
  </svg>
  <div class="t" style="left:397px;top:318px;letter-spacing:-0.5px">Videa</div>
  <div class="t sub" style="left:397px;top:334px">Uloženo místně</div>
  <svg style="left:401px;top:349px" width="11" height="11" viewBox="0 0 11 11"><path d="M6.2 0.4 L10.6 4.8 L9.6 5.6 L8.2 5.4 L6.4 7.4 L6.8 9.2 L6 10 L1 5 L1.8 4.2 L3.6 4.6 L5.6 2.8 L5.4 1.4 Z" fill="#8a8a8a"/><path d="M3.6 7.4 L0.6 10.4" stroke="#8a8a8a" stroke-width="1.3" stroke-linecap="round"/></svg>
  <svg style="left:624px;top:321px" width="42" height="33" viewBox="0 0 42 33">
    <defs><linearGradient id="gzaz" x1="0" y1="0" x2="1" y2="1"><stop offset="0" stop-color="#fee598"/><stop offset="1" stop-color="#fbc53a"/></linearGradient></defs>
    <path d="M0 2.5 Q0 0 2.5 0 H15.5 Q17 0 18 1 L21.6 5 H39.5 Q42 5 42 7.5 V14 H0 Z" fill="#f5b51a"/>
    <path d="M0 9.6 Q0 7.2 2.5 7.2 H17 Q18.6 7.2 19.6 6.2 L20.4 5.6 Q21 5 22 5 H39.5 Q42 5 42 7.5 V30.5 Q42 33 39.5 33 H2.5 Q0 33 0 30.5 Z" fill="url(#gzaz)"/>
    
  </svg>
  <div class="t" style="left:681px;top:318px;letter-spacing:-0.4px">Záznamy</div>
  <div class="t sub" style="left:681px;top:334px;letter-spacing:-0.5px">Videa</div>
  <svg style="left:281px;top:387px" width="13" height="7" viewBox="0 0 13 7"><path d="M0.5 0.5 L6.5 6.3 L12.5 0.5" fill="none" stroke="#333" stroke-width="1"/></svg>
  <div class="t hd" style="left:309px;top:385px">Oblíbené</div>
  <div class="t" style="left:309px;top:411px;color:#8a8a8a;letter-spacing:-0.07px">Až označíte nějaké soubory jako oblíbené, zobrazíme je tady.</div>


  <div class="t" style="left:15px;top:665px;color:#333;letter-spacing:-0.2px">Počet položek: 8</div>
  <div class="a" style="left:111px;top:665px;width:1px;height:11px;background:#ececec"></div>
</div>
<div class="frame"></div>
</body></html>
